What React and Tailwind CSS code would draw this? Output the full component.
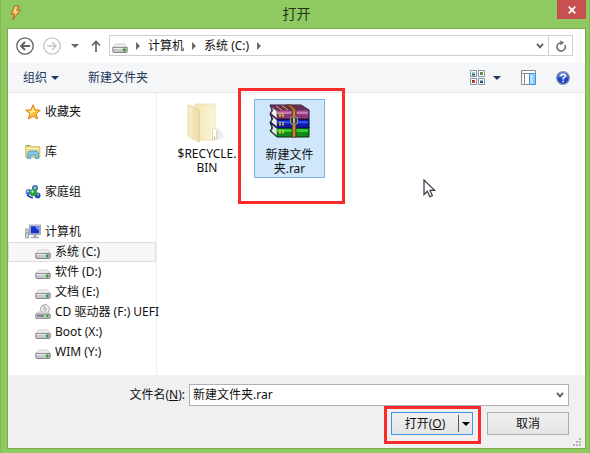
import React from "react";

function Bolt() {
  return (
    <svg viewBox="0 0 12 16" className="h-4 w-3" aria-hidden="true">
      <path d="M4.5 1 9 .8 7.2 5.2l3.3-.4L2.6 15l1.8-6L1 9.4z" fill="#f59a3c" stroke="#b5652b" strokeWidth=".9" />
      <path d="M5.2 2 7.3 1.8 5.6 6.2 8.4 6 4.6 11 5.6 7.8 3 8.2z" fill="#fde08a" />
    </svg>
  );
}

function Drive() {
  return (
    <svg viewBox="0 0 16 16" className="h-4 w-4 shrink-0" aria-hidden="true">
      <path d="M3.600 6h8.800L15 9.600H1z" fill="#f0f0f1" stroke="#bdbdc0" strokeWidth=".7" />
      <path d="M.8 9.400h14.400v3.800q0 1.300-1.300 1.300H2.100Q.8 14.500.8 13.200z" fill="#c6c6cb" stroke="#77777c" strokeWidth=".9" />
      <path d="M1.500 10.400h9" stroke="#f4f4f6" strokeWidth=".9" />
      <rect x="11" y="10.500" width="2.600" height="3" rx=".8" fill="#2fa52f" />
    </svg>
  );
}

function CdDrive() {
  return (
    <svg viewBox="0 0 16 16" className="h-4 w-4 shrink-0" aria-hidden="true">
      <circle cx="10" cy="5" r="4.400" fill="#f0f0f2" stroke="#9b9ba0" strokeWidth=".9" />
      <path d="M10 5 7 2.200A4 4 0 0 1 10 1z" fill="#bcd9bd" />
      <circle cx="10" cy="5" r="1.300" fill="#fff" stroke="#77777c" strokeWidth=".6" />
      <path d="M3 8h10l2 2.500H1z" fill="#ececee" stroke="#a5a5a9" strokeWidth=".6" />
      <rect x=".7" y="10" width="14.600" height="4.400" rx="1" fill="#cdcdd1" stroke="#707075" strokeWidth=".8" />
      <path d="M2 12h7" stroke="#444" strokeWidth="1" />
      <rect x="11.200" y="11" width="2.400" height="2.200" fill="#2fa52f" />
    </svg>
  );
}

function Star() {
  return (
    <svg viewBox="0 0 16 16" className="h-4 w-4 shrink-0" aria-hidden="true">
      <path d="m8 .8 2 5 5.300.4-4.100 3.500 1.400 5.300L8 12.200 3.400 15l1.400-5.300L.7 6.200 6 5.800z" fill="#ffbf3a" stroke="#df7a1f" strokeWidth="1" strokeLinejoin="round" />
      <path d="m8 3 1.200 3.700 3.200.4-4.400.9-3 3.200.9-2.800L3.200 7l3.500-.3z" fill="#fff08a" />
    </svg>
  );
}

function Library() {
  return (
    <svg viewBox="0 0 16 16" className="h-4 w-4 shrink-0" aria-hidden="true">
      <path d="M.7 1.500h5l1 1.300h8.100v10.400H.7z" fill="#f2dc8b" stroke="#c9a94d" strokeWidth=".8" />
      <path d="M1.200 4.500h13" stroke="#fff4c4" strokeWidth="1" />
      <path d="M2 1.800h2.500" stroke="#68a84c" strokeWidth="1.200" />
      <path d="M2.400 14.500 3 9Q3.200 7 5 7h6q1.800 0 2 2l.7 5.500h-3.200V12q0-1-1-1h-3q-1 0-1 1v2.500z" fill="#83c9ee" stroke="#3f91c8" strokeWidth=".8" />
    </svg>
  );
}

function HomeGroup() {
  return (
    <svg viewBox="0 0 16 16" className="h-4 w-4 shrink-0" aria-hidden="true">
      <circle cx="10" cy="4" r="3" fill="#4464c4" />
      <circle cx="3.600" cy="8" r="2.900" fill="#5376cf" />
      <circle cx="12.600" cy="11.400" r="2.900" fill="#2849ad" />
      <circle cx="8.400" cy="8.700" r="3.600" fill="#2b9c39" />
      <circle cx="10" cy="3.700" r="1.500" fill="#7fd18a" />
      <circle cx="7.600" cy="7.600" r="1.300" fill="#a5e6a2" />
      <circle cx="2.900" cy="7.300" r="1" fill="#c5d8fa" />
      <path d="M2 10.500q2 3 6 3.300" stroke="#2849ad" strokeWidth="1.600" fill="none" />
      <circle cx="13" cy="10.600" r="1" fill="#9db9f2" />
    </svg>
  );
}

function Computer() {
  return (
    <svg viewBox="0 0 16 16" className="h-4 w-4 shrink-0" aria-hidden="true">
      <rect x=".6" y="5" width="3" height="9" fill="#d0d4d8" stroke="#888d92" strokeWidth=".7" />
      <path d="M1.400 9h1.400" stroke="#36a336" strokeWidth="1.200" />
      <rect x="4.500" y="1" width="11" height="9.500" fill="#dadde2" stroke="#92969c" strokeWidth=".8" />
      <rect x="5.700" y="2.200" width="8.600" height="7.200" fill="#1733c8" />
      <path d="M9.500 2.200h4.800v5.100z" fill="#7795ee" />
      <path d="M8.500 10.700h3v2h2.500v1.600H6v-1.600h2.500z" fill="#a7abb0" />
    </svg>
  );
}

function Chevron() {
  return (
    <svg viewBox="0 0 8 6" className="h-1.5 w-2" aria-hidden="true">
      <path d="M1 .8 4 4.400 7 .8" fill="none" stroke="#5a5a5a" strokeWidth="1.800" />
    </svg>
  );
}

function Caret({ className }) {
  return (
    <svg viewBox="0 0 8 4" className={className} aria-hidden="true">
      <path d="M0 0h8L4 4z" fill="currentColor" />
    </svg>
  );
}

function Crumb() {
  return (
    <svg viewBox="0 0 4 8" className="h-2 w-1 shrink-0" aria-hidden="true">
      <path d="M0 0 4 4 0 8z" fill="#6a6a6a" />
    </svg>
  );
}

function Folder() {
  return (
    <svg viewBox="0 0 42 40" className="h-10 w-[42px]" aria-hidden="true">
      <defs>
        <linearGradient id="folderFront" x1="0" x2="1">
          <stop offset="0" stopColor="#f9f0ca" />
          <stop offset="1" stopColor="#ecdba0" />
        </linearGradient>
        <linearGradient id="folderBack" x1="0" x2="1">
          <stop offset="0" stopColor="#f2e5b4" />
          <stop offset="1" stopColor="#fbf5da" />
        </linearGradient>
        <linearGradient id="folderShadow" x1="0" x2="1">
          <stop offset="0" stopColor="#dedede" />
          <stop offset="1" stopColor="#fff" />
        </linearGradient>
      </defs>
      <path d="M28 37 41 36 32 25z" fill="url(#folderShadow)" />
      <path d="M9 1h18q2 0 2 2v34H12z" fill="url(#folderBack)" stroke="#ead99f" strokeWidth=".7" />
      <path d="M2 1.500 12 6q1.500 1 1.500 3v30L3 34q-1-.5-1-2z" fill="url(#folderFront)" stroke="#e0cf98" strokeWidth=".7" />
      <path d="M26.500 27q0-2 2-2t2 2v9l-4 1z" fill="#fff" stroke="#dccb91" strokeWidth=".7" />
      <path d="M28.500 34v2" stroke="#78b7e8" strokeWidth="1" />
    </svg>
  );
}

function Archive() {
  return (
    <svg viewBox="0 0 42 34" className="h-[34px] w-[42px]" aria-hidden="true">
      <path d="M1 18 8 23H40v10H8L1 27l2-3z" fill="#12871b" stroke="#0a2b0c" />
      <path d="M2 19.500 8 24v8l-6-5 2-3z" fill="#e6e6e6" stroke="#333" strokeWidth=".6" />
      <path d="M8 25h31v3H8z" fill="#2ed030" />
      <path d="M1 9.500 8 15H40v9H8L1 19l2-4z" fill="#1119a6" stroke="#07072f" />
      <path d="M2 11 8 16v7l-6-5 2-3z" fill="#ececec" stroke="#333" strokeWidth=".6" />
      <path d="M8 17h31v2.500H8z" fill="#3050ee" />
      <path d="M1 1h31l8 5v9H8L1 10l2-4z" fill="#8f3a7d" stroke="#2e1028" />
      <path d="M2 1.500h29l7 4.500H8z" fill="#63305a" />
      <path d="M2 2.500 8 7v7.500L2 9.500 4 6z" fill="#f2f2f2" stroke="#333" strokeWidth=".6" />
      <path d="M8 7.500h31V10H8z" fill="#c777b4" />
      <path d="M11 9v4m3-4v4M11 18v4m3-4v4M11 26v4m3-4v4" stroke="#e2cc31" strokeWidth="1.800" strokeDasharray="1.400 .7" />
      <path d="m7 2 6 4m0-4.500L19 6" stroke="#d8a83d" strokeWidth="1" />
      <path d="m18 1 5 5v27h4V5l-5-4z" fill="#a8662b" stroke="#4b2b10" strokeWidth=".8" />
      <path d="M25 6v27" stroke="#d99b55" strokeWidth="1" />
      <rect x="21.500" y="13" width="7" height="7" rx="1.500" fill="#3a3a38" stroke="#b8b8a8" strokeWidth=".8" />
      <path d="M25 14v5" stroke="#e6e6d8" strokeWidth="1.400" />
    </svg>
  );
}

function Views() {
  return (
    <svg viewBox="0 0 15 15" className="h-[15px] w-[15px]" aria-hidden="true">
      <g fill="#fff" stroke="#8794a8">
        <path d="M.5.5h6v6h-6zM8.500.5h6v6h-6zM.5 8.500h6v6h-6zM8.500 8.500h6v6h-6z" />
      </g>
      <path d="M2 2h3v3H2z" fill="#7ecbe6" />
      <path d="M2 4h3v1.500H2z" fill="#1e5b36" />
      <path d="M10 2h3v3h-3z" fill="#35a046" />
      <path d="M11.500 2H13v1.500h-1.500z" fill="#e25831" />
      <path d="M2 10h3v3H2z" fill="#d3482a" />
      <path d="M2 10h1.500v1.500H2z" fill="#6b231a" />
      <path d="M10 10h3v3h-3z" fill="#7bb6e8" />
      <path d="M10 11.500h3V13h-3z" fill="#1b2533" />
    </svg>
  );
}

function Preview() {
  return (
    <svg viewBox="0 0 15 15" className="h-[15px] w-[15px]" aria-hidden="true">
      <path d="M.5.5h14v14H.5z" fill="#fff" stroke="#868a90" />
      <path d="M.5 3.500h14M3.500 3.500v11" stroke="#868a90" />
      <path d="M8.500 3.500h6v11h-6z" fill="#8dccf8" stroke="#4295d6" />
      <path d="M9.500 4.500h2v9h-2z" fill="#c9e8ff" />
    </svg>
  );
}

function Help() {
  return (
    <svg viewBox="0 0 14 14" className="h-3.5 w-3.5" aria-hidden="true">
      <circle cx="7" cy="7" r="6.300" fill="#2246c8" stroke="#8b93a8" strokeWidth="1.200" />
      <path d="M2 6.500a5 5 0 0 1 10 0Q7 4.500 2 6.500" fill="#6d8de4" />
      <path d="M4.900 5.500q0-2.200 2.200-2.200t2.100 1.900Q9.200 6.400 7.100 7.300v1.200" fill="none" stroke="#fff" strokeWidth="1.500" />
      <circle cx="7.100" cy="10.400" r=".9" fill="#fff" />
    </svg>
  );
}

const places = [
  { name: "收藏夹", Icon: Star },
  { name: "库", Icon: Library },
  { name: "家庭组", Icon: HomeGroup },
];

const drives = [
  { name: "系统 (C:)", Icon: Drive, selected: true },
  { name: "软件 (D:)", Icon: Drive },
  { name: "文档 (E:)", Icon: Drive },
  { name: "CD 驱动器 (F:) UEFI", Icon: CdDrive },
  { name: "Boot (X:)", Icon: Drive },
  { name: "WIM (Y:)", Icon: Drive },
];

function Place({ name, Icon }) {
  return (
    <button type="button" className="flex h-5 w-full items-center gap-1 pl-[17px] whitespace-nowrap">
      <Icon />
      {name}
    </button>
  );
}

function TitleBar() {
  return (
    <header className="-mr-[3px] grid h-7 grid-cols-[1fr_auto_1fr] items-start pl-[3px] text-[#26331c]">
      <span className="pt-[5px]"><Bolt /></span>
      <h1 className="pr-[3px] text-sm leading-7">打开</h1>
      <button type="button" aria-label="关闭" className="flex h-[19px] w-[29px] items-center justify-center justify-self-end bg-[#c75050]">
        <svg viewBox="0 0 8 8" className="h-2 w-2" aria-hidden="true">
          <path d="m.7.7 6.600 6.600m0-6.600L.7 7.300" stroke="#fff" strokeWidth="1.700" />
        </svg>
      </button>
    </header>
  );
}

function Navigation() {
  return (
    <nav className="flex h-[34px] items-center pr-3 pb-px pl-2">
      <button type="button" aria-label="后退">
        <svg viewBox="0 0 18 18" className="h-[18px] w-[18px]" fill="none" stroke="#626262" aria-hidden="true">
          <circle cx="9" cy="9" r="8.200" strokeWidth="1.300" />
          <path d="M14 9H5m4-4L5 9l4 4" strokeWidth="1.900" />
        </svg>
      </button>
      <button type="button" aria-label="前进" className="ml-[9px]">
        <svg viewBox="0 0 18 18" className="h-[18px] w-[18px]" fill="none" stroke="#c6c6c6" aria-hidden="true">
          <circle cx="9" cy="9" r="8.200" strokeWidth="1.300" />
          <path d="M4 9h9M9 5l4 4-4 4" strokeWidth="1.500" />
        </svg>
      </button>
      <button type="button" aria-label="最近位置" className="ml-2.5 text-[#6a6a6a]"><Caret className="h-1 w-2" /></button>
      <button type="button" aria-label="上移" className="ml-3">
        <svg viewBox="0 0 10 12" className="h-3 w-2.5" fill="none" stroke="#606060" strokeWidth="1.700" aria-hidden="true">
          <path d="M5 12V1.500M1 5.500l4-4 4 4" />
        </svg>
      </button>
      <div className="ml-2 flex h-[21px] min-w-0 flex-1 items-center border border-[#cfcfcf] bg-white">
        <div className="flex flex-1 items-center pl-0.5">
          <span className="mr-2"><Drive /></span>
          <Crumb />
          <button type="button" className="mx-2">计算机</button>
          <Crumb />
          <button type="button" className="mx-2">系统 (C:)</button>
          <Crumb />
        </div>
        <button type="button" aria-label="以前的位置" className="flex h-full w-4 items-center justify-center"><Chevron /></button>
        <button type="button" aria-label="刷新" className="flex h-full w-6 items-center justify-center border-l border-[#cfcfcf]">
          <svg viewBox="0 0 12 12" className="h-3 w-3" aria-hidden="true">
            <path d="M9.800 4.800A4.200 4.200 0 1 1 6 2.700" fill="none" stroke="#737373" strokeWidth="1.600" />
            <path d="M5.300.2 9.200 2.800 5.300 5.400z" fill="#737373" />
          </svg>
        </button>
      </div>
    </nav>
  );
}

function Toolbar() {
  return (
    <div className="flex h-[30px] items-center border-b border-[#e6e7e9] bg-[#f5f6f7] pr-[15px] pl-[15px] text-[#1e395b]">
      <button type="button" className="flex items-center gap-1">组织 <Caret className="h-1 w-2" /></button>
      <button type="button" className="ml-[29px]">新建文件夹</button>
      <button type="button" aria-label="视图" className="ml-auto"><Views /></button>
      <button type="button" aria-label="更多视图" className="ml-2"><Caret className="h-1 w-2" /></button>
      <button type="button" aria-label="预览窗格" className="ml-5"><Preview /></button>
      <button type="button" aria-label="帮助" className="ml-5"><Help /></button>
    </div>
  );
}

function Sidebar() {
  return (
    <aside className="flex w-[149px] shrink-0 flex-col gap-5 border-r border-[#f0f0f0] pt-[9px]">
      {places.map((place) => <Place key={place.name} {...place} />)}
      <div>
        <Place name="计算机" Icon={Computer} />
        {drives.map(({ name, Icon, selected }) => (
          <button
            key={name}
            type="button"
            className={`flex h-5 w-full items-center gap-1 border pl-[26px] whitespace-nowrap ${selected ? "border-[#dedede] bg-[#f7f7f7]" : "border-transparent"}`}
          >
            <Icon />
            {name}
          </button>
        ))}
      </div>
    </aside>
  );
}

function Files() {
  return (
    <main className="relative flex flex-1 items-start gap-3 pt-[6px] pl-[15px] leading-[14px]">
      <button type="button" className="flex w-[70px] flex-col items-center pt-1 text-center">
        <Folder />
        <span className="pt-1">$RECYCLE.<br />BIN</span>
      </button>
      <button type="button" className="relative flex h-[79px] w-[71px] flex-col items-center border border-[#7fb4e6] bg-[#cfe6fb] pt-1 text-center">
        <Archive />
        <span className="pt-2.5">新建文件<br />夹.rar</span>
        <span className="pointer-events-none absolute -top-3 -left-[17px] h-[116px] w-[107px] border-3 border-[#fb2b2b]" />
      </button>
      <svg viewBox="0 0 14 20" className="absolute top-[86px] left-[266px] h-5 w-3.5" aria-hidden="true">
        <path d="M1 1v14.500l3.400-3.200 2.400 5.500 2.600-1.200L7 11.300h4.600z" fill="#fff" stroke="#333a44" strokeWidth="1.200" />
      </svg>
    </main>
  );
}

function Footer() {
  return (
    <footer className="relative bg-[#f0f0f0] pt-[9px] pr-4 pb-[13px]">
      <div className="flex items-center">
        <label htmlFor="filename" className="w-[181px] shrink-0 pr-1 text-right">文件名(<u>N</u>):</label>
        <div className="flex h-[22px] min-w-0 flex-1 items-center border border-[#aeb0b8] bg-white">
          <input id="filename" type="text" defaultValue="新建文件夹.rar" className="min-w-0 flex-1 px-[3px] outline-none" />
          <button type="button" aria-label="文件名列表" className="flex h-full w-4 items-center justify-center"><Chevron /></button>
        </div>
      </div>
      <div className="mt-1.5 flex justify-end gap-3.5">
        <div className="relative flex h-[23px] w-[82px] items-center border border-[#3c98ef] bg-linear-to-b from-[#f0f0f0] to-[#e5e5e5]">
          <button type="button" className="h-full flex-1">打开(<u>O</u>)</button>
          <button type="button" aria-label="打开选项" className="flex h-[17px] w-3.5 items-center justify-center border-l border-[#555] text-black"><Caret className="h-1 w-2" /></button>
          <span className="pointer-events-none absolute -top-[7px] -left-2 h-[38px] w-[97px] border-3 border-[#fb2b2b]" />
        </div>
        <button type="button" className="h-[23px] w-[82px] border border-[#acacac] bg-linear-to-b from-[#f0f0f0] to-[#e5e5e5]">取消</button>
      </div>
      <svg viewBox="0 0 8 8" className="absolute right-1 bottom-0.5 h-2 w-2" fill="#b5b5b5" aria-hidden="true">
        <path d="M6 0h2v2H6zM3 3h2v2H3zM6 3h2v2H6zM0 6h2v2H0zM3 6h2v2H3zM6 6h2v2H6z" />
      </svg>
    </footer>
  );
}

export default function App() {
  return (
    <div className="flex min-h-screen flex-col border-x border-[#82b856] bg-[#8fc962] px-[6px] pb-1 font-['Noto_Sans','Noto_Sans_CJK_SC',sans-serif] text-xs text-[#111]">
      <TitleBar />
      <div className="-mr-[3px] flex flex-1 flex-col border border-[#78ac4d] bg-white">
        <Navigation />
        <Toolbar />
        <div className="flex flex-1">
          <Sidebar />
          <Files />
        </div>
        <Footer />
      </div>
    </div>
  );
}
